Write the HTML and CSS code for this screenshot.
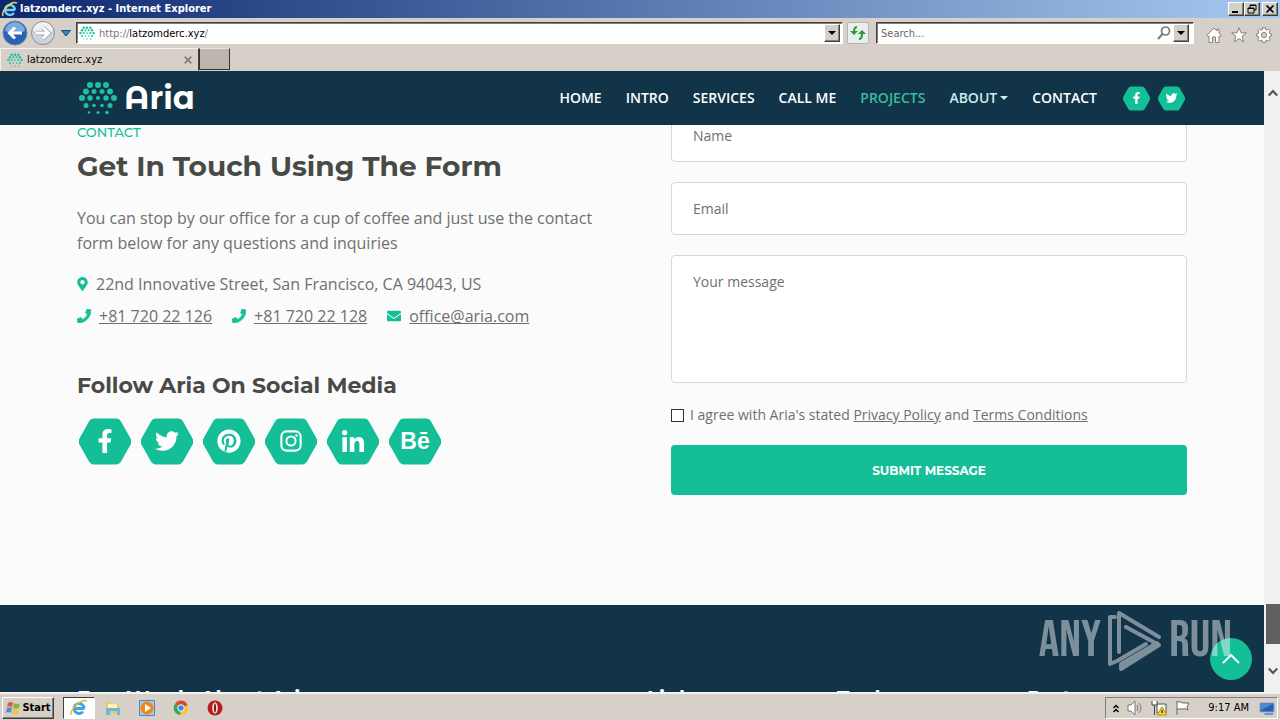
FILE: index.html
```html
<!DOCTYPE html>
<html lang="en">
<head>
<meta charset="utf-8">
<title>latzomderc.xyz</title>
<link rel="stylesheet" href="styles.css">
</head>
<body>
<svg class="defs" aria-hidden="true">
  <symbol id="dots" viewBox="0 0 38 34"><g fill="#1fc0a0">
    <circle cx="11" cy="4" r="3"/><circle cx="19" cy="4" r="3"/><circle cx="27" cy="4" r="3"/>
    <circle cx="7" cy="10.500" r="3"/><circle cx="15" cy="10.500" r="2.500"/><circle cx="23" cy="10.500" r="2.500"/><circle cx="31" cy="10.500" r="3"/>
    <circle cx="3" cy="17" r="3"/><circle cx="11" cy="17" r="2.700"/><circle cx="19" cy="17" r="2.100"/><circle cx="27" cy="17" r="2.700"/><circle cx="35" cy="17" r="3"/>
    <circle cx="7" cy="24.500" r="2.500"/><circle cx="15" cy="24.500" r="1.800"/><circle cx="23" cy="24.500" r="1.800"/><circle cx="31" cy="24.500" r="2.500"/>
    <circle cx="10" cy="31.500" r="1.300"/><circle cx="19" cy="31.500" r="1.600"/><circle cx="28" cy="31.500" r="1.800"/></g></symbol>
  <symbol id="hex" viewBox="0 0 52 47"><path d="M15 3h22q2 0 3 2l9 16q1.500 2.500 0 5l-9 16q-1 2-3 2H15q-2 0-3-2L3 26q-1.500-2.500 0-5l9-16q1-2 3-2z" fill="#14bf98" stroke="#14bf98" stroke-width="5" stroke-linejoin="round"/></symbol>
  <symbol id="facebook" viewBox="0 0 320 512"><path fill="currentColor" d="M279.14 288l14.22-92.66h-88.91v-60.13c0-25.35 12.42-50.06 52.24-50.06h40.42V6.26S260.43 0 225.36 0c-73.22 0-121.08 44.38-121.08 124.72v70.62H22.89V288h81.39v224h100.17V288z"/></symbol>
  <symbol id="twitter" viewBox="0 0 512 512"><path fill="currentColor" d="M459.37 151.716c.325 4.548.325 9.097.325 13.645 0 138.72-105.583 298.558-298.558 298.558-59.452 0-114.68-17.219-161.137-47.106 8.447.974 16.568 1.299 25.34 1.299 49.055 0 94.213-16.568 130.274-44.832-46.132-.975-84.792-31.188-98.112-72.772 6.498.974 12.995 1.624 19.818 1.624 9.421 0 18.843-1.3 27.614-3.573-48.081-9.747-84.143-51.98-84.143-102.985v-1.299c13.969 7.797 30.214 12.67 47.431 13.319-28.264-18.843-46.781-51.005-46.781-87.391 0-19.492 5.197-37.36 14.294-52.954 51.655 63.675 129.3 105.258 216.365 109.807-1.624-7.797-2.599-15.918-2.599-24.04 0-57.828 46.782-104.934 104.934-104.934 30.213 0 57.502 12.67 76.67 33.137 23.715-4.548 46.456-13.32 66.599-25.34-7.798 24.366-24.366 44.833-46.132 57.827 21.117-2.273 41.584-8.122 60.426-16.243-14.292 20.791-32.161 39.308-52.628 54.253z"/></symbol>
  <symbol id="pinterest" viewBox="0 0 496 512"><path fill="currentColor" d="M496 256c0 137-111 248-248 248-25.6 0-50.2-3.9-73.4-11.1 10.1-16.5 25.2-43.5 30.8-65 3-11.6 15.4-59 15.4-59 8.1 15.4 31.7 28.5 56.8 28.5 74.8 0 128.7-68.8 128.7-154.3 0-81.9-66.9-143.2-152.9-143.2-107 0-163.9 71.8-163.9 150.1 0 36.4 19.4 81.7 50.3 96.1 4.7 2.2 7.2 1.2 8.3-3.3.8-3.4 5-20.3 6.900-28.100.6-2.500.3-4.700-1.700-7.100-10.100-12.500-18.300-35.300-18.300-56.600 0-54.700 41.400-107.600 112-107.600 60.900 0 103.600 41.500 103.600 100.900 0 67.100-33.900 113.600-78 113.600-24.300 0-42.600-20.100-36.700-44.800 7-29.500 20.500-61.300 20.500-82.600 0-19-10.200-34.900-31.400-34.900-24.900 0-44.900 25.700-44.900 60.200 0 22 7.400 36.800 7.400 36.800s-24.500 103.800-29 123.200c-5 21.400-3 51.600-.9 71.200C65.400 450.900 0 361.100 0 256 0 119 111 8 248 8s248 111 248 248z"/></symbol>
  <symbol id="instagram" viewBox="0 0 24 24"><g fill="none" stroke="currentColor" stroke-width="2.200"><rect x="1.500" y="1.500" width="21" height="21" rx="5.500"/><circle cx="12" cy="12" r="5"/></g><circle cx="18" cy="6" r="1.400" fill="currentColor"/></symbol>
  <symbol id="linkedin" viewBox="0 0 448 448"><path fill="currentColor" d="M100.28 448H7.4V148.9h92.88zM53.79 108.1C24.09 108.1 0 83.5 0 53.8a53.79 53.79 0 0 1 107.58 0c0 29.7-24.1 54.3-53.79 54.3zM447.9 448h-92.68V302.4c0-34.7-.7-79.2-48.29-79.2-48.29 0-55.69 37.7-55.69 76.7V448h-92.78V148.9h89.08v40.8h1.3c12.4-23.5 42.69-48.3 87.88-48.3 94 0 111.28 61.9 111.28 142.3V448z"/></symbol>
  <symbol id="phone" viewBox="0 0 512 512"><path fill="currentColor" stroke="currentColor" stroke-width="24" d="M493.4 24.6l-104-24c-11.3-2.6-22.9 3.3-27.5 13.9l-48 112c-4.2 9.8-1.4 21.3 6.9 28l60.6 49.6c-36 76.7-98.9 140.5-177.2 177.2l-49.6-60.6c-6.8-8.3-18.2-11.1-28-6.9l-112 48C3.9 366.5-2 378.1.6 389.4l24 104C27.1 504.2 36.7 512 48 512c256.1 0 464-207.5 464-464 0-11.2-7.7-20.9-18.6-23.4z"/></symbol>
</svg>

<header class="titlebar">
  <svg class="ie" viewBox="0 0 16 16"><path d="M13 9H4M13 9a5 5 0 1 0-1 3" fill="none" stroke="#6fd0fa" stroke-width="2.400"/><path d="M1 15C-1 10 9-1 15 2" fill="none" stroke="#f5d34c" stroke-width="1.500"/></svg>
  <span class="window-title">latzomderc.xyz - Internet Explorer</span>
  <div class="window-buttons">
    <button class="bevel" aria-label="Minimize"><svg viewBox="0 0 14 12"><path d="M3 9h6" stroke="#000" stroke-width="2"/></svg></button>
    <button class="bevel" aria-label="Restore"><svg viewBox="0 0 14 12"><path d="M5 5V2h6v5H9M5 2.500h6M3 5h6v5H3zM3 5.500h6" fill="none" stroke="#000"/></svg></button>
    <button class="bevel close" aria-label="Close"><svg viewBox="0 0 14 12"><path d="M3.500 2.500l7 7m0-7l-7 7" stroke="#000" stroke-width="1.700"/></svg></button>
  </div>
</header>

<div class="toolbar">
  <div class="history">
    <button class="plain" aria-label="Back"><svg class="round" viewBox="0 0 26 26"><circle cx="13" cy="13" r="12" fill="#2762b8" stroke="#7088a8"/><path d="M3 11a10 9 0 0 1 20 0q-10 4-20 0z" fill="#7ba9e2"/><path d="M20 13H8m5-5.500L7.500 13l5.500 5.500" fill="none" stroke="#fff" stroke-width="3"/></svg></button>
    <button class="plain" aria-label="Forward"><svg class="round" viewBox="0 0 26 26"><circle cx="13" cy="13" r="11.500" fill="#ccd3da" stroke="#858e97"/><path d="M3 11a10 9 0 0 1 20 0q-10 4-20 0z" fill="#eff2f4"/><path d="M6 13h12m-5-5.500l5.500 5.500-5.500 5.500" fill="none" stroke="#969fa8" stroke-width="4.500"/><path d="M6 13h12m-5-5.500l5.500 5.500-5.500 5.500" fill="none" stroke="#fff" stroke-width="3"/></svg></button>
    <button class="plain" aria-label="Recent pages"><svg class="recent" viewBox="0 0 10 7"><path d="M.5.500h9L5 6z" fill="#3f85cc" stroke="#164672"/></svg></button>
  </div>
  <div class="field address">
    <svg class="favicon"><use href="#dots"/></svg>
    <span class="url"><span class="dim">http://</span>latzomderc.xyz<span class="dim">/</span></span>
    <button class="bevel drop" aria-label="Show addresses"><svg viewBox="0 0 8 4"><path d="M0 0h8L4 4z"/></svg></button>
  </div>
  <button class="refresh" aria-label="Refresh"><svg viewBox="0 0 16 16"><g fill="none" stroke="#2d9a2d" stroke-width="2"><path d="M7 2Q4 2 4 7M9 14q3 0 3-5"/></g><path d="M0 6h8l-4 4zM8 9h8l-4-4z" fill="#2d9a2d"/></svg></button>
  <div class="field search">
    <input class="search-input" type="text" placeholder="Search..." aria-label="Search">
    <svg class="lens" viewBox="0 0 14 14"><circle cx="8.500" cy="5" r="4" fill="none" stroke="#777" stroke-width="1.700"/><path d="M5.500 8L1 13" stroke="#777" stroke-width="2"/></svg>
    <button class="bevel drop" aria-label="Search options"><svg viewBox="0 0 8 4"><path d="M0 0h8L4 4z"/></svg></button>
  </div>
  <div class="tools">
    <button class="plain" aria-label="Home"><svg viewBox="0 0 16 16"><path d="M8 1L.7 8.500l1.500 1L3 9v6.500h3.500V10h3v5.500H13V9l.8.500 1.500-1L13 6V2h-2v2z" fill="#fff" stroke="#85817a"/></svg></button>
    <button class="plain" aria-label="Favorites"><svg viewBox="0 0 16 16"><path d="M8 .8l2 5h5.300l-4.200 3.500 1.600 5.500L8 11.600l-4.700 3.200 1.600-5.500L.7 5.800H6z" fill="#fff" stroke="#85817a"/></svg></button>
    <button class="plain" aria-label="Tools"><svg viewBox="0 0 16 16"><path d="M6.800.6h2.400l.4 1.900 1.400.6 1.700-1.100 1.500 1.600-1.100 1.600.6 1.500 1.800.3v2.200l-1.800.4-.6 1.400 1.100 1.700-1.600 1.500-1.600-1-1.400.5-.4 1.900H6.800l-.4-1.900-1.400-.6-1.700 1.100-1.500-1.600 1.100-1.600-.6-1.400L.5 9.200V7l1.800-.4.6-1.500-1.100-1.600L3.400 2l1.600 1 1.400-.5z" fill="#fff" stroke="#85817a"/><circle cx="8" cy="8" r="2.600" fill="#d6d0c8" stroke="#85817a"/></svg></button>
  </div>
</div>

<div class="tabs">
  <div class="tab"><svg class="favicon"><use href="#dots"/></svg><span>latzomderc.xyz</span><button class="plain tab-close" aria-label="Close tab"><svg viewBox="0 0 8 8"><path d="M.7.700l6.600 6.600m0-6.600L.7 7.300" stroke="#858078" stroke-width="1.800"/></svg></button></div>
  <button class="new-tab" aria-label="New tab"></button>
</div>

<div class="viewport">
  <div class="page">
    <nav class="navbar">
      <div class="container nav-inner">
        <a class="brand" href="#"><svg><use href="#dots"/></svg><span>Aria</span></a>
        <div class="links">
          <a href="#">HOME</a><a href="#">INTRO</a><a href="#">SERVICES</a><a href="#">CALL ME</a><a class="active" href="#">PROJECTS</a><a class="about" href="#">ABOUT<i class="caret"></i></a><a href="#">CONTACT</a>
        </div>
        <div class="nav-social">
          <a class="hex small" href="#" aria-label="Facebook"><svg class="shape"><use href="#hex"/></svg><svg class="glyph"><use href="#facebook"/></svg></a>
          <a class="hex small" href="#" aria-label="Twitter"><svg class="shape"><use href="#hex"/></svg><svg class="glyph"><use href="#twitter"/></svg></a>
        </div>
      </div>
    </nav>
    <main class="main">
      <div class="container contact">
        <section class="info">
          <div class="eyebrow">CONTACT</div>
          <h2>Get In Touch Using The Form</h2>
          <p>You can stop by our office for a cup of coffee and just use the contact form below for any questions and inquiries</p>
          <ul class="details">
            <li class="item"><svg class="pin" viewBox="0 0 384 512"><path fill="currentColor" d="M172.268 501.670C26.970 291.031 0 269.413 0 192 0 85.961 85.961 0 192 0s192 85.961 192 192c0 77.413-26.970 99.031-172.268 309.670-9.535 13.774-29.930 13.773-39.464 0zM192 272c44.183 0 80-35.817 80-80s-35.817-80-80-80-80 35.817-80 80 35.817 80 80 80z"/></svg>22nd Innovative Street, San Francisco, CA 94043, US</li>
            <li class="item"><svg><use href="#phone"/></svg><a href="#">+81 720 22 126</a></li>
            <li class="item"><svg><use href="#phone"/></svg><a href="#">+81 720 22 128</a></li>
            <li class="item"><svg viewBox="0 0 512 512"><path fill="currentColor" d="M502.3 190.8c3.9-3.1 9.7-.2 9.7 4.7V400c0 26.5-21.5 48-48 48H48c-26.5 0-48-21.5-48-48V195.6c0-5 5.7-7.8 9.7-4.7 22.4 17.4 52.1 39.5 154.1 113.6 21.1 15.4 56.7 47.8 92.2 47.6 35.7.3 72-32.8 92.3-47.6 102-74.1 131.6-96.3 154-113.7zM256 320c23.2.4 56.6-29.2 73.4-41.4 132.7-96.3 142.8-104.7 173.4-128.7 5.8-4.5 9.2-11.5 9.2-18.9v-19c0-26.5-21.5-48-48-48H48c-26.5 0-48 21.5-48 48v19c0 7.4 3.4 14.3 9.2 18.9 30.6 23.9 40.7 32.4 173.4 128.7 16.8 12.2 50.2 41.8 73.4 41.4z"/></svg><a href="#">office@aria.com</a></li>
          </ul>
          <h3>Follow Aria On Social Media</h3>
          <div class="social">
            <a class="hex" href="#" aria-label="Facebook"><svg class="shape"><use href="#hex"/></svg><svg class="glyph"><use href="#facebook"/></svg></a>
            <a class="hex" href="#" aria-label="Twitter"><svg class="shape"><use href="#hex"/></svg><svg class="glyph"><use href="#twitter"/></svg></a>
            <a class="hex" href="#" aria-label="Pinterest"><svg class="shape"><use href="#hex"/></svg><svg class="glyph"><use href="#pinterest"/></svg></a>
            <a class="hex" href="#" aria-label="Instagram"><svg class="shape"><use href="#hex"/></svg><svg class="glyph inset"><use href="#instagram"/></svg></a>
            <a class="hex" href="#" aria-label="LinkedIn"><svg class="shape"><use href="#hex"/></svg><svg class="glyph inset"><use href="#linkedin"/></svg></a>
            <a class="hex" href="#" aria-label="Behance"><svg class="shape"><use href="#hex"/></svg><span class="glyph-text">Bē</span></a>
          </div>
        </section>
        <form class="form">
          <input class="box" type="text" placeholder="Name" aria-label="Name">
          <input class="box" type="email" placeholder="Email" aria-label="Email">
          <textarea class="box area" placeholder="Your message" aria-label="Your message"></textarea>
          <div class="agree"><input type="checkbox" id="agree"><label for="agree">I agree with Aria's stated <a href="#">Privacy Policy</a> and <a href="#">Terms Conditions</a></label></div>
          <button class="submit" type="submit">SUBMIT MESSAGE</button>
        </form>
      </div>
    </main>
    <footer class="footer">
      <div class="container footer-grid"><h4>Few Words About Aria</h4><h4>Links</h4><h4>Tools</h4><h4>Partners</h4></div>
    </footer>
    <button class="to-top" aria-label="Back to top"><svg viewBox="0 0 18 10"><path d="M1 9l8-8 8 8" fill="none" stroke="#fff" stroke-width="2"/></svg></button>
    <div class="watermark"><span>ANY</span><svg viewBox="0 0 56 62"><g fill="none" stroke="currentColor" stroke-width="4" stroke-linecap="round" stroke-linejoin="round"><path d="M8 7H3v47l7-3 29-17"/><path d="M12 42V3l40 24M19 17l33 18-38 24v-5l36-21"/></g></svg><span>RUN</span></div>
  </div>
  <div class="scrollbar" aria-hidden="true">
    <svg viewBox="0 0 10 8"><path d="M.8 6.500L5 2l4.200 4.500" fill="none" stroke="#555" stroke-width="2.200"/></svg>
    <div class="thumb"></div>
    <svg viewBox="0 0 10 8"><path d="M.8 1.500L5 6l4.200-4.500" fill="none" stroke="#555" stroke-width="2.200"/></svg>
  </div>
</div>

<footer class="taskbar">
  <button class="bevel start"><svg viewBox="0 0 16 16"><path d="M3 3q3-2 5 0L7 7Q4 5.500 2 7z" fill="#e8552e"/><path d="M9 3q3 2 6 0l-1 5q-3 1.500-6 0z" fill="#82b944"/><path d="M2 8q3-1.500 5 0l-1 5q-3-2-5.500 0z" fill="#4d8fdc"/><path d="M8 9q3 1.500 6 0l-1 4.500q-3 2-6 0z" fill="#f5c33b"/></svg>Start</button>
  <div class="apps">
    <button class="app active" aria-label="Internet Explorer"><svg viewBox="0 0 18 18"><path d="M14.500 9.500H5M14 9.500a5 5 0 1 0-1 3" fill="none" stroke="#3ba5e3" stroke-width="2.800"/><path d="M1 16C0 11 11-1 17 2" fill="none" stroke="#eeb827" stroke-width="1.500"/></svg></button>
    <button class="app" aria-label="Explorer"><svg viewBox="0 0 18 18"><path d="M2 3h5l1 2h7v10H2z" fill="#e8ca67"/><path d="M4 5h9v4H4z" fill="#fff3ba"/><path d="M2 9h14v7h-3v-4H6v4H2z" fill="#69b9df"/></svg></button>
    <button class="app" aria-label="Media Player"><svg viewBox="0 0 18 18"><path d="M1.500 1.500h15v15h-15z" fill="#a8cbea" stroke="#4e86bf"/><circle cx="9" cy="9" r="6.500" fill="#f08616"/><path d="M7 5l6 4-6 4z" fill="#fff"/></svg></button>
    <button class="app" aria-label="Chrome"><svg viewBox="0 0 18 18"><circle cx="9" cy="9" r="7" fill="#f5c52d"/><path d="M9 9L3 5a7 7 0 0 1 12.500 1z" fill="#dc4639"/><path d="M9 9L3 5a7 7 0 0 0 5 11z" fill="#3da557"/><circle cx="9" cy="9" r="3.300" fill="#4384e8" stroke="#fff"/></svg></button>
    <button class="app" aria-label="Opera"><svg viewBox="0 0 18 18"><circle cx="9" cy="9" r="7.500" fill="#b91a1c"/><ellipse cx="9" cy="9" rx="2.800" ry="5.800" fill="#eee5e2"/><ellipse cx="9" cy="9" rx="1" ry="4.500" fill="#861214"/></svg></button>
  </div>
  <div class="tray">
    <svg class="chev" viewBox="0 0 6 9"><path d="M.5 4L3 1.500 5.500 4M.5 8L3 5.500 5.500 8" fill="none" stroke="#000" stroke-width="1.400"/></svg>
    <svg viewBox="0 0 16 16"><path d="M1 5h3l4-4v14l-4-4H1z" fill="#fff" stroke="#777"/><path d="M10 5q2 3 0 6M12 3q4 5 0 10" fill="none" stroke="#777"/></svg>
    <svg viewBox="0 0 16 16"><path d="M6 4h9v9H6z" fill="#f8f8f8" stroke="#555"/><path d="M1 1v4h5V1M3.500 5v10" fill="#fff" stroke="#444"/><path d="M11 7l5 8H6z" fill="#f6d42b" stroke="#b09213"/><path d="M11 10v3" stroke="#000"/></svg>
    <svg viewBox="0 0 16 16"><path d="M2 1v14M2 2q3-1 6 1h6l-2 4 1 3Q10 8 8 9H2" fill="#fff" stroke="#666"/></svg>
    <span class="clock">9:17 AM</span>
    <svg viewBox="0 0 16 16"><path d="M1 3h14v9H1z" fill="#2460b4" stroke="#8ba8cc"/><path d="M2 4h12L2 10z" fill="#4f8bd5"/><path d="M6 13h8v2H5z" fill="#6f96c4"/></svg>
  </div>
</footer>
</body>
</html>
```
FILE: styles.css
```css
* { box-sizing: border-box; }
body { margin: 0; height: 100vh; display: flex; flex-direction: column; overflow: hidden; background: #d6d0c8; font: 11px/14px Tahoma, "DejaVu Sans Condensed", sans-serif; color: #000; }
button { font: inherit; color: inherit; padding: 0; margin: 0; }
svg { display: block; flex: none; }
.defs { position: absolute; width: 0; height: 0; }
.plain { border: 0; background: none; }
.bevel { display: flex; align-items: center; justify-content: center; background: #d4d0c8; border: 1px solid; border-color: #fff #404040 #404040 #fff; box-shadow: inset -1px -1px #808080; }

.titlebar { flex: none; height: 18px; display: flex; align-items: center; gap: 2px; padding: 0 2px; background: linear-gradient(90deg, #0c276e, #a6caf0); }
.ie { width: 16px; height: 16px; }
.window-title { flex: 1; color: #fff; font-weight: bold; }
.window-buttons { display: flex; }
.window-buttons .bevel { width: 16px; height: 14px; }
.window-buttons svg { width: 14px; height: 12px; }
.window-buttons .close { margin-left: 2px; }

.toolbar { flex: none; height: 30px; display: flex; align-items: center; padding: 0 8px 0 2px; }
.history { display: flex; align-items: center; gap: 2px; width: 74px; flex: none; }
.round { width: 26px; height: 26px; }
.recent { width: 10px; height: 7px; margin-left: 3px; }
.field { display: flex; align-items: center; height: 22px; background: #fff; border: 1px solid; border-color: #404040 #fff #fff #404040; box-shadow: inset 1px 1px #808080; padding: 2px; }
.address { flex: 1; gap: 4px; }
.favicon { width: 16px; height: 14px; }
.url { flex: 1; padding-top: 2px; }
.dim { color: #777; }
.drop { width: 16px; height: 18px; }
.drop svg { width: 8px; height: 4px; }
.refresh { width: 22px; height: 22px; flex: none; display: flex; align-items: center; justify-content: center; margin: 0 7px 0 4px; border: 1px solid #b6b6b6; border-radius: 2px; background: #e9eef1; }
.refresh svg { width: 16px; height: 16px; }
.search { flex: 0 1 318px; padding-right: 4px; }
.search-input { flex: 1; min-width: 0; border: 0; outline: 0; padding: 2px 2px 0; background: none; font: inherit; }
.search-input::placeholder { color: #666; opacity: 1; }
.lens { width: 14px; height: 14px; margin-right: 2px; }
.tools { display: flex; gap: 9px; margin-left: 12px; padding-top: 3px; }
.tools svg { width: 16px; height: 16px; }

.tabs { flex: none; height: 23px; display: flex; }
.tab { width: 199px; display: flex; align-items: center; gap: 4px; padding: 0 6px; border: 1px solid; border-color: #f4f2ee #404040 transparent #f4f2ee; }
.tab-close { margin-left: auto; }
.tab-close svg { width: 8px; height: 8px; }
.new-tab { width: 31px; height: 22px; background: #bdb5ae; border: 1px solid; border-color: #e7e3de #333 #333 #333; }

.viewport { flex: 1; min-height: 0; display: flex; }
.page { flex: 1; min-width: 0; position: relative; display: flex; flex-direction: column; overflow: hidden; background: #fbfbfb; font-family: "Open Sans", sans-serif; color: #6f6f6f; }
.container { width: 100%; max-width: 1110px; margin: 0 auto; }
.navbar { flex: none; background: #113448; color: #fff; }
.nav-inner { display: flex; align-items: center; height: 54px; padding-right: 2px; }
.brand { display: flex; align-items: center; gap: 7px; margin-left: 2px; margin-right: auto; color: #fff; text-decoration: none; font: bold 32px/40px "Montserrat Alternates", Montserrat, sans-serif; }
.brand svg { width: 38px; height: 34px; }
.links { display: flex; gap: 24px; font-size: 14px; line-height: 20px; font-weight: 600; }
.links a { color: #fff; text-decoration: none; }
.links .active { color: #36bd9d; }
.links .about { color: #c8eef0; }
.caret { display: inline-block; border: 4px solid transparent; border-top-color: currentColor; border-bottom: 0; margin-left: 3px; vertical-align: 3px; }
.nav-social { display: flex; gap: 8px; margin-left: 26px; }
.hex { display: grid; place-items: center; width: 52px; height: 48px; color: #fff; text-decoration: none; }
.hex > * { grid-area: 1 / 1; }
.shape { width: 52px; height: 47px; }
.glyph { width: 26px; height: 24px; }
.inset { width: 22px; height: 22px; }
.glyph-text { font: bold 23px/24px "Liberation Sans", sans-serif; }
.small, .small .shape { width: 27px; height: 25px; }
.small .glyph { width: 13px; height: 12px; }

.main { flex: none; overflow: hidden; padding-bottom: 110px; }
.contact { display: grid; grid-template-columns: 1fr 1fr; gap: 78px; margin-top: -16px; }
.eyebrow { margin-top: 14px; font: 500 13px/18px Montserrat, Inter, sans-serif; color: #14bf98; }
h2, h3, h4 { margin: 0; font-family: Montserrat, Inter, sans-serif; font-weight: 700; color: #484a46; }
h2 { font-size: 28px; line-height: 36px; margin-top: 7px; }
.info p { margin: 22px 0 0; font-size: 16px; line-height: 25px; }
.details { list-style: none; margin: 12px 0 0; padding: 0; display: flex; flex-wrap: wrap; column-gap: 20px; font-size: 16px; line-height: 32px; }
.item { display: flex; align-items: center; gap: 8px; }
.item:first-child { width: 100%; }
.item svg { width: 14px; height: 14px; color: #14bf98; }
.item .pin { width: 11px; }
.info a, .agree a { color: inherit; }
h3 { font-size: 22px; line-height: 28px; margin-top: 40px; }
.social { display: flex; gap: 10px; margin: 17px 0 0 2px; }
.info .hex { color: #fff; }

.form { display: flex; flex-direction: column; gap: 20px; font-size: 14px; line-height: 20px; }
.box { display: block; width: 100%; height: 53px; border: 1px solid #d5d8d9; border-radius: 4px; background: #fff; padding: 0 21px; font: inherit; color: inherit; }
.box::placeholder { color: #707070; opacity: 1; }
.area { height: 128px; padding: 16px 21px; resize: none; }
.agree { display: flex; align-items: center; gap: 6px; margin-top: 2px; }
.agree input { appearance: none; width: 13px; height: 13px; margin: 0; border: 1px solid #333; background: #fff; }
.submit { height: 50px; border: 0; border-radius: 4px; background: #14bf98; color: #fff; font: 700 12px/18px Montserrat, Inter, sans-serif; padding-top: 2px; }

.footer { flex: 1; min-height: 0; overflow: hidden; background: #113448; padding-top: 79px; }
.footer-grid { display: grid; grid-template-columns: 57fr 19fr 19fr 16fr; }
h4 { color: #fff; font-size: 20px; line-height: 28px; }
.to-top { position: absolute; right: 12px; bottom: 12px; width: 42px; height: 42px; border: 0; border-radius: 50%; background: #14bf98; display: grid; place-items: center; }
.to-top svg { width: 18px; height: 10px; }
.watermark { position: absolute; right: 32px; bottom: 20px; display: flex; align-items: center; gap: 6px; color: #fff; opacity: .45; font: 51px/62px "Bebas Neue", Oswald, "DejaVu Sans Condensed", sans-serif; pointer-events: none; }
.watermark svg { width: 56px; height: 62px; }

.scrollbar { width: 16px; flex: none; display: flex; flex-direction: column; align-items: center; background: #f0f0f0; padding: 18px 0 17px 1px; }
.scrollbar svg { width: 10px; height: 8px; }
.thumb { width: 14px; height: 40px; margin: auto 0 23px; background: #606060; }

.taskbar { flex: none; height: 28px; display: flex; align-items: center; padding: 2px 2px 0; border-top: 2px solid #f4f2ee; }
.start { height: 22px; width: 52px; font-weight: bold; font-size: 11px; gap: 1px; }
.start svg { width: 16px; height: 16px; }
.apps { display: flex; gap: 2px; margin-left: 9px; }
.app { width: 32px; height: 22px; border: 1px solid transparent; background: none; display: grid; place-items: center; }
.app.active { background: #fff; border-color: #404040 #fff #fff #404040; }
.app svg { width: 18px; height: 18px; }
.tray { margin-left: auto; height: 22px; display: flex; align-items: center; gap: 8px; padding: 0 2px 0 7px; border: 1px solid; border-color: #808080 #fff #fff #808080; }
.tray svg { width: 16px; height: 16px; }
.tray .chev { width: 6px; height: 9px; }
.clock { margin: 0 2px 0 9px; }
```
